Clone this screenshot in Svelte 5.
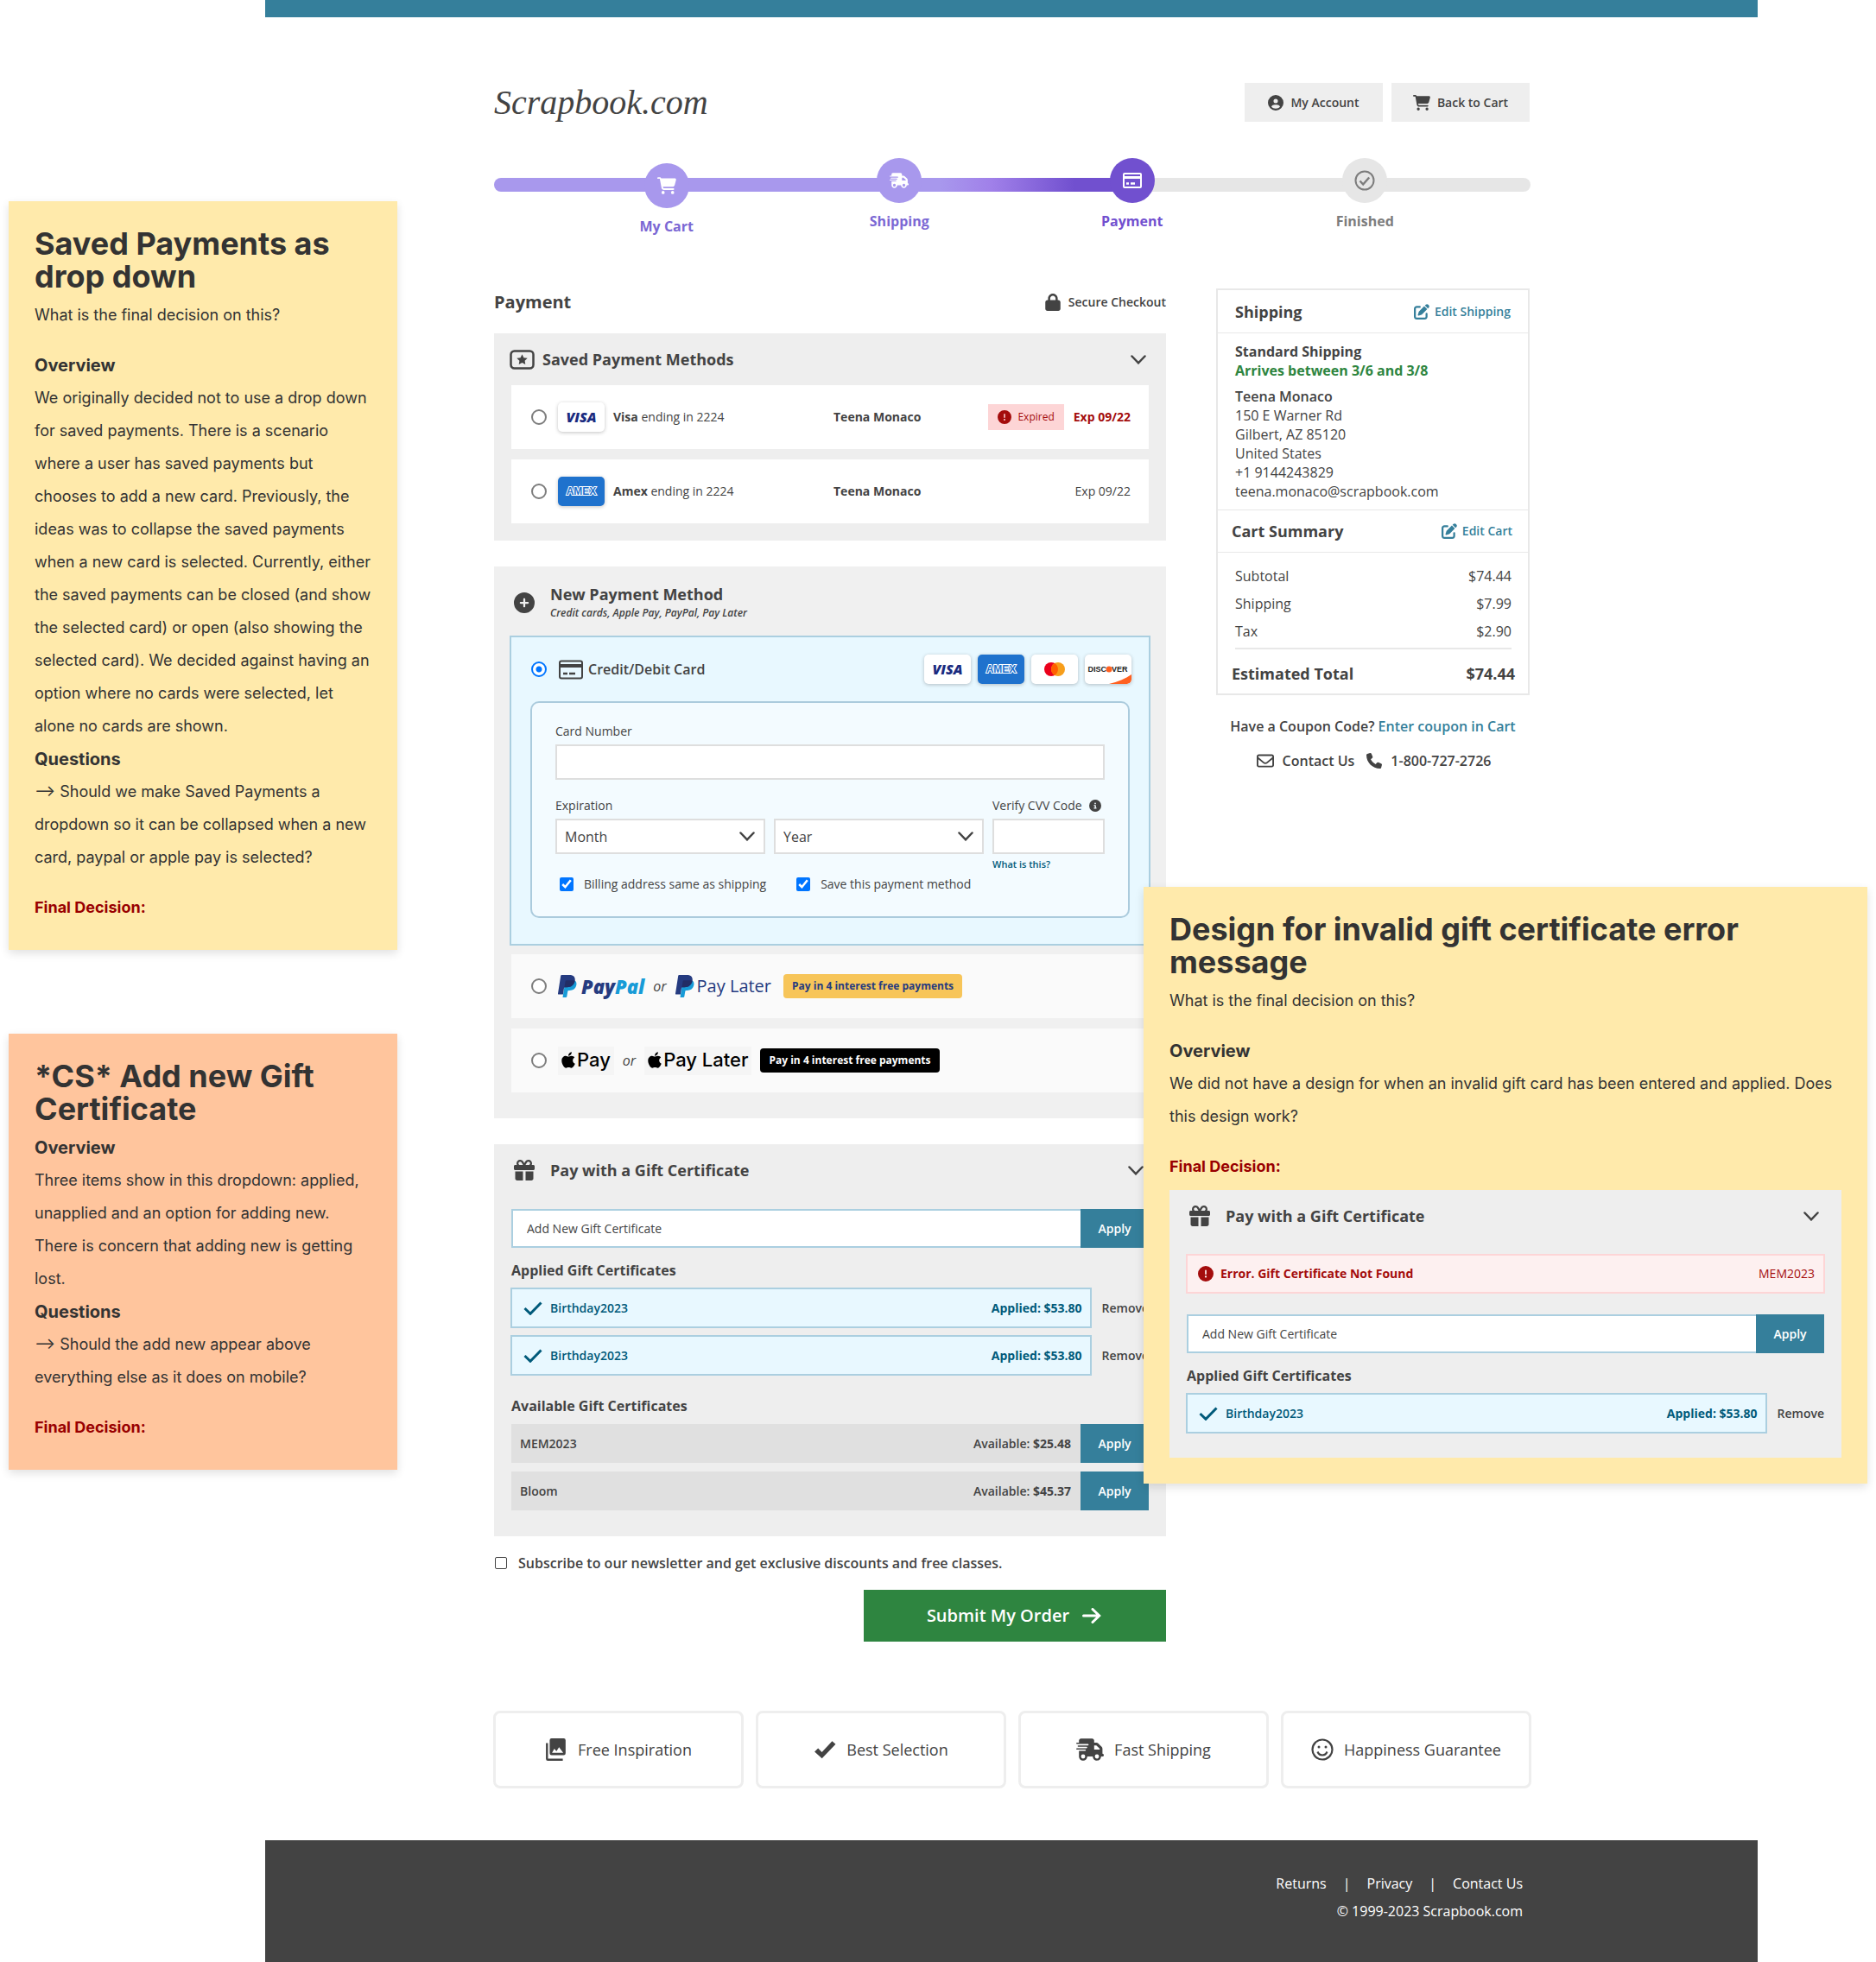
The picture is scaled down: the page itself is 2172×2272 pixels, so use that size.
<script>
  const icons = {
    cart: { vb: '0 0 576 512', d: 'M0 24C0 10.7 10.7 0 24 0H69.5c22 0 41.5 12.8 50.6 32h411c26.3 0 45.5 25 38.6 50.4l-41 152.3c-8.5 31.4-37 53.3-69.5 53.3H170.7l5.4 28.5c2.2 11.3 12.1 19.5 23.6 19.5H488c13.3 0 24 10.7 24 24s-10.7 24-24 24H199.7c-34.6 0-64.3-24.6-70.7-58.5L77.4 54.5c-.7-3.8-4-6.5-7.9-6.5H24C10.7 48 0 37.3 0 24zM128 464a48 48 0 1 1 96 0 48 48 0 1 1 -96 0zm336-48a48 48 0 1 1 0 96 48 48 0 1 1 0-96z' },
    user: { vb: '0 0 512 512', d: 'M399 384.2C376.9 345.8 335.4 320 288 320H224c-47.4 0-88.9 25.8-111 64.2c35.2 39.2 86.2 63.8 143 63.8s107.8-24.7 143-63.8zM0 256a256 256 0 1 1 512 0A256 256 0 1 1 0 256zm256 16a72 72 0 1 0 0-144 72 72 0 1 0 0 144z' },
    truck: { vb: '0 0 640 512', d: 'M112 0C85.5 0 64 21.5 64 48V96H16c-8.8 0-16 7.2-16 16s7.2 16 16 16H64 272c8.8 0 16 7.2 16 16s-7.2 16-16 16H64 48c-8.8 0-16 7.2-16 16s7.2 16 16 16H64 240c8.8 0 16 7.2 16 16s-7.2 16-16 16H64 16c-8.8 0-16 7.2-16 16s7.2 16 16 16H64 208c8.8 0 16 7.2 16 16s-7.2 16-16 16H64V416c0 53 43 96 96 96s96-43 96-96H384c0 53 43 96 96 96s96-43 96-96h32c17.7 0 32-14.3 32-32s-14.3-32-32-32V288 256 237.3c0-17-6.7-33.3-18.7-45.3L512 114.7c-12-12-28.3-18.7-45.3-18.7H416V48c0-26.5-21.5-48-48-48H112zM544 237.3V256H416V160h50.7L544 237.3zM160 368a48 48 0 1 1 0 96 48 48 0 1 1 0-96zm272 48a48 48 0 1 1 96 0 48 48 0 1 1 -96 0z' },
    lock: { vb: '0 0 448 512', d: 'M144 144v48H304V144c0-44.2-35.8-80-80-80s-80 35.8-80 80zM80 192V144C80 64.5 144.5 0 224 0s144 64.5 144 144v48h16c35.3 0 64 28.7 64 64V448c0 35.3-28.7 64-64 64H64c-35.3 0-64-28.7-64-64V256c0-35.3 28.7-64 64-64H80z' },
    edit: { vb: '0 0 512 512', d: 'M471.6 21.7c-21.9-21.9-57.3-21.9-79.2 0L362.3 51.7l97.9 97.9 30.1-30.1c21.9-21.9 21.9-57.3 0-79.2L471.6 21.7zm-299.2 220c-6.1 6.1-10.8 13.6-13.5 21.9l-29.6 88.8c-2.9 8.6-.6 18.1 5.8 24.6s15.9 8.7 24.6 5.8l88.8-29.6c8.2-2.7 15.7-7.4 21.9-13.5L437.7 172.3 339.7 74.3 172.4 241.7zM96 64C43 64 0 107 0 160V416c0 53 43 96 96 96H352c53 0 96-43 96-96V320c0-17.7-14.3-32-32-32s-32 14.3-32 32v96c0 17.7-14.3 32-32 32H96c-17.7 0-32-14.3-32-32V160c0-17.7 14.3-32 32-32h96c17.7 0 32-14.3 32-32s-14.3-32-32-32H96z' },
    mail: { vb: '0 0 512 512', d: 'M64 112c-8.8 0-16 7.2-16 16v22.1L220.5 291.7c20.7 17 50.4 17 71.1 0L464 150.1V128c0-8.8-7.2-16-16-16H64zM48 212.2V384c0 8.8 7.2 16 16 16H448c8.8 0 16-7.2 16-16V212.2L322 328.8c-38.4 31.5-93.7 31.5-132 0L48 212.2zM0 128C0 92.7 28.7 64 64 64H448c35.3 0 64 28.7 64 64V384c0 35.3-28.7 64-64 64H64c-35.3 0-64-28.7-64-64V128z' },
    phone: { vb: '0 0 512 512', d: 'M164.9 24.6c-7.7-18.6-28-28.5-47.4-23.2l-88 24C12.1 30.2 0 46 0 64C0 311.4 200.6 512 448 512c18 0 33.8-12.1 38.6-29.5l24-88c5.3-19.4-4.6-39.7-23.2-47.4l-96-40c-16.3-6.8-35.2-2.1-46.3 11.6L304.7 368C234.3 334.7 177.3 277.7 144 207.3L193.3 167c13.7-11.2 18.4-30 11.6-46.3l-40-96z' },
    plus: { vb: '0 0 512 512', d: 'M256 512A256 256 0 1 0 256 0a256 256 0 1 0 0 512zM232 344V280H168c-13.3 0-24-10.7-24-24s10.7-24 24-24h64V168c0-13.3 10.7-24 24-24s24 10.7 24 24v64h64c13.3 0 24 10.7 24 24s-10.7 24-24 24H280v64c0 13.3-10.7 24-24 24s-24-10.7-24-24z' },
    gift: { vb: '0 0 512 512', d: 'M190.5 68.8L225.3 128H224 152c-22.1 0-40-17.9-40-40s17.9-40 40-40h2.2c14.9 0 28.8 7.9 36.3 20.8zM64 88c0 14.4 3.5 28 9.6 40H32c-17.7 0-32 14.3-32 32v64c0 17.7 14.3 32 32 32H480c17.7 0 32-14.3 32-32V160c0-17.7-14.3-32-32-32H438.4c6.1-12 9.6-25.6 9.6-40c0-48.6-39.4-88-88-88h-2.2c-31.9 0-61.5 16.9-77.7 44.4L256 85.5l-24.1-41C215.7 16.9 186.1 0 154.2 0H152C103.4 0 64 39.4 64 88zm336 0c0 22.1-17.9 40-40 40H288h-1.3l34.8-59.2C329.1 55.9 342.9 48 357.8 48H360c22.1 0 40 17.9 40 40zM32 288V464c0 26.5 21.5 48 48 48H224V288H32zM288 512H432c26.5 0 48-21.5 48-48V288H288V512z' },
    alert: { vb: '0 0 512 512', d: 'M256 512A256 256 0 1 0 256 0a256 256 0 1 0 0 512zm0-384c13.300 0 24 10.700 24 24V264c0 13.300-10.700 24-24 24s-24-10.700-24-24V152c0-13.300 10.700-24 24-24zM224 352a32 32 0 1 1 64 0 32 32 0 1 1 -64 0z' },
    info: { vb: '0 0 512 512', d: 'M256 512A256 256 0 1 0 256 0a256 256 0 1 0 0 512zM216 336h24V272H216c-13.300 0-24-10.700-24-24s10.700-24 24-24h48c13.300 0 24 10.700 24 24v88h8c13.300 0 24 10.700 24 24s-10.700 24-24 24H216c-13.300 0-24-10.700-24-24s10.700-24 24-24zm40-208a32 32 0 1 1 0 64 32 32 0 1 1 0-64z' },
    photos: { vb: '0 0 24 24', d: 'M22 16V2a2 2 0 0 0-2-2H7a2 2 0 0 0-2 2v14a2 2 0 0 0 2 2h13a2 2 0 0 0 2-2zM10 11l2.200 2.900L15 9.500l4.500 6H7.500L10 11zM1 5v17a2 2 0 0 0 2 2h16v-2.200H3.200V5H1z' },
    tick: { vb: '0 0 24 24', d: 'M1 14.200 4.800 10.500 8.800 14.700 19.800 3 23.500 6.200 8.900 21.500z' }
  };

  const saved = [
    { id: 'visa', brand: 'Visa', last: '2224', owner: 'Teena Monaco', exp: 'Exp 09/22', expired: true },
    { id: 'amex', brand: 'Amex', last: '2224', owner: 'Teena Monaco', exp: 'Exp 09/22', expired: false }
  ];
  const applied = [
    { code: 'Birthday2023', amount: '$53.80' },
    { code: 'Birthday2023', amount: '$53.80' }
  ];
  const available = [
    { code: 'MEM2023', amount: '$25.48' },
    { code: 'Bloom', amount: '$45.37' }
  ];
  const totals = [
    ['Subtotal', '$74.44'],
    ['Shipping', '$7.99'],
    ['Tax', '$2.90']
  ];
  const perks = [
    { icon: 'photos', label: 'Free Inspiration' },
    { icon: 'tick', label: 'Best Selection' },
    { icon: 'truck', label: 'Fast Shipping' },
    { icon: 'smile', label: 'Happiness Guarantee' }
  ];
  let method = $state('card');
</script>

{#snippet icon(name, size)}
  <svg class="icon {size}" viewBox={icons[name].vb} aria-hidden="true"><path d={icons[name].d} /></svg>
{/snippet}

{#snippet chevron()}
  <svg class="chevron" viewBox="0 0 18 11" aria-hidden="true"><path d="M1.500 1.500 9 9.300 16.500 1.500" /></svg>
{/snippet}

{#snippet check()}
  <svg class="check" viewBox="0 0 22 16" aria-hidden="true"><path d="M1.500 8 8 14.300 20.500 1.500" /></svg>
{/snippet}

{#snippet cardLogo(brand)}
  {#if brand === 'visa'}
    <svg class="paycard" viewBox="0 0 54 34" role="img" aria-label="Visa"><text class="visa" x="27" y="23" text-anchor="middle">VISA</text></svg>
  {:else if brand === 'amex'}
    <svg class="paycard blue" viewBox="0 0 54 34" role="img" aria-label="Amex"><text class="amex" x="27" y="21" text-anchor="middle">AMEX</text></svg>
  {:else if brand === 'mastercard'}
    <svg class="paycard" viewBox="0 0 54 34" role="img" aria-label="Mastercard">
      <circle cx="23" cy="17" r="8" fill="#eb001b" /><circle cx="31" cy="17" r="8" fill="#f79e1b" />
      <path d="M27 10.100a8 8 0 0 1 0 13.800 8 8 0 0 1 0-13.800z" fill="#ff5f00" />
    </svg>
  {:else}
    <svg class="paycard" viewBox="0 0 54 34" role="img" aria-label="Discover">
      <path d="M28 34C38 31.500 47 28 54 23v6a5 5 0 0 1-5 5z" fill="#ff6020" />
      <text class="disc" x="25" y="20" text-anchor="end">DISC</text><circle cx="28" cy="17" r="3.500" fill="#ff6020" />
      <text class="disc" x="31" y="20">VER</text>
    </svg>
  {/if}
{/snippet}

{#snippet ppMark()}
  <svg class="ppmark" viewBox="0 0 22 26" aria-hidden="true">
    <path fill="#179bd7" d="M19.600 6.500c1.700 1.300 2.200 3.100 1.700 5.300-.9 4.200-3.800 6.200-7.800 6.200h-1.200c-.5 0-.9.400-1 .9l-1 6.100c-.1.600-.5 1-1.100 1H5.500l3-19.500z" />
    <path fill="#253b80" d="M4.300 0h8.800c4.700 0 7.300 2.300 6.500 6.800-.9 5-4.300 7.400-9.100 7.400H8.100c-.6 0-1 .4-1.100 1l-1.100 7.300H.8c-.5 0-.9-.4-.8-.9L3.200 1C3.300.4 3.700 0 4.300 0z" />
    <path fill="#222d65" d="M8.600 7.200c.1-.6.500-.9 1-.9h6.300c1.300 0 2.600.1 3.700.5-.9 5-4.300 7.400-9.100 7.400H8.100c-.3 0-.5.100-.7.300z" />
  </svg>
{/snippet}

{#snippet apple()}
  <svg class="apple" viewBox="0 0 384 512" aria-hidden="true"><path d="M318.700 268.700c-.2-36.700 16.400-64.400 50-84.800-18.800-26.900-47.200-41.700-84.700-44.600-35.500-2.800-74.300 20.700-88.500 20.700-15 0-49.400-19.700-76.400-19.700C63.300 141.200 4 184.800 4 273.500q0 39.300 14.400 81.200c12.800 36.700 59 126.700 107.200 125.200 25.200-.6 43-17.900 75.800-17.900 31.800 0 48.300 17.900 76.400 17.900 48.600-.7 90.400-82.500 102.600-119.300-65.200-30.700-61.700-90-61.700-91.900zm-56.600-164.200c27.300-32.400 24.800-61.900 24-72.500-24.100 1.400-52 16.400-67.900 34.900-17.500 19.800-27.800 44.300-25.600 71.900 26.100 2 49.900-11.400 69.500-34.300z" /></svg>
{/snippet}

{#snippet giftHead()}
  <header class="panel-head">
    {@render icon('gift', 's24')}
    <h2>Pay with a Gift Certificate</h2>
    <button class="bare push" aria-label="Toggle gift certificates">{@render chevron()}</button>
  </header>
{/snippet}

{#snippet giftForm(id)}
  <div class="joined add">
    <input {id} type="text" placeholder="Add New Gift Certificate" aria-label="Add New Gift Certificate" />
    <button class="apply">Apply</button>
  </div>
{/snippet}

{#snippet appliedRow(g)}
  <div class="applied">
    <div class="applied-box">
      {@render check()}
      <span>{g.code}</span>
      <strong class="push">Applied: {g.amount}</strong>
    </div>
    <button class="bare remove">Remove</button>
  </div>
{/snippet}

<div class="canvas">
  <div class="frame">
    <div class="topbar"></div>
    <div class="content">
      <header class="masthead">
        <a class="logo" href="#home">Scrapbook.com</a>
        <nav class="account">
          <a class="grey-btn" href="#account">{@render icon('user', 's18')}My Account</a>
          <a class="grey-btn" href="#cart">{@render icon('cart', 's20')}Back to Cart</a>
        </nav>
      </header>

      <div class="stepper">
        <div class="track"></div>
        <ol class="steps">
          <li class="start"><span class="dot">{@render icon('cart', 's22')}</span>My Cart</li>
          <li><span class="dot">{@render icon('truck', 's22')}</span>Shipping</li>
          <li class="current">
            <span class="dot">
              <svg class="s22" viewBox="0 0 22 18" fill="none" stroke="#fff" stroke-width="2" aria-hidden="true"><rect x="1" y="1" width="20" height="16" rx="1" /><path d="M1 5.500h20" stroke-width="3" /><path d="M4 12.500h3M9 12.500h5" stroke-width="2.500" /></svg>
            </span>Payment
          </li>
          <li class="todo">
            <span class="dot">
              <svg class="s24" viewBox="0 0 24 24" fill="none" stroke="#7d7d7d" stroke-width="2" aria-hidden="true"><circle cx="12" cy="12" r="10.500" /><path d="m6.500 12.500 3.700 4 7-8" stroke-width="2.500" /></svg>
            </span>Finished
          </li>
        </ol>
      </div>

      <div class="columns">
        <main>
          <div class="title-row">
            <h1>Payment</h1>
            <span class="secure">{@render icon('lock', 's20')}Secure Checkout</span>
          </div>

          <section class="panel">
            <header class="panel-head tight">
              <svg class="star" viewBox="0 0 29 23" aria-hidden="true"><rect x="1.500" y="1.500" width="26" height="20" rx="4" fill="none" stroke="#434343" stroke-width="2.500" /><path fill="#434343" d="m14.500 5.300 1.900 3.900 4.300.6-3.100 3 .7 4.300-3.800-2-3.800 2 .7-4.300-3.100-3 4.300-.6z" /></svg>
              <h2>Saved Payment Methods</h2>
              <button class="bare push" aria-label="Toggle saved payment methods">{@render chevron()}</button>
            </header>
            <div class="stack">
              {#each saved as s}
                <div class="saved-row">
                  <input type="radio" id={s.id} value={s.id} bind:group={method} />
                  {@render cardLogo(s.id)}
                  <label for={s.id}><strong>{s.brand}</strong> ending in {s.last}</label>
                  <strong>{s.owner}</strong>
                  <span class="exp" class:late={s.expired}>
                    {#if s.expired}<span class="expired">{@render icon('alert', 's16')}Expired</span>{/if}
                    <span>{s.exp}</span>
                  </span>
                </div>
              {/each}
            </div>
          </section>

          <section class="panel new">
            <header class="panel-head tall">
              {@render icon('plus', 's24')}
              <div>
                <h2>New Payment Method</h2>
                <p>Credit cards, Apple Pay, PayPal, Pay Later</p>
              </div>
            </header>
            <div class="card-box">
              <div class="card-head">
                <input type="radio" id="card" value="card" bind:group={method} />
                <svg class="s28" viewBox="0 0 28 23" fill="none" stroke="#434343" stroke-width="2" aria-hidden="true"><rect x="1" y="1.500" width="26" height="20" rx="2" /><path d="M1 7h26" stroke-width="4" /><path d="M5 16h5M12 16h7" stroke-width="2.500" /></svg>
                <label for="card">Credit/Debit Card</label>
                <span class="logos push">
                  {#each ['visa', 'amex', 'mastercard', 'discover'] as b}{@render cardLogo(b)}{/each}
                </span>
              </div>
              <div class="card-form">
                <label for="number">Card Number</label>
                <input id="number" type="text" />
                <div class="fields">
                  <div>
                    <label for="month">Expiration</label>
                    <div class="select"><select id="month"><option>Month</option></select>{@render chevron()}</div>
                  </div>
                  <div>
                    <label for="year" aria-label="Expiration year">&nbsp;</label>
                    <div class="select"><select id="year"><option>Year</option></select>{@render chevron()}</div>
                  </div>
                  <div>
                    <label class="cvv" for="cvv">Verify CVV Code {@render icon('info', 's14')}</label>
                    <input id="cvv" type="text" />
                    <a class="what" href="#cvv-help">What is this?</a>
                  </div>
                </div>
                <div class="checks">
                  <label><input type="checkbox" checked />Billing address same as shipping</label>
                  <label><input type="checkbox" checked />Save this payment method</label>
                </div>
              </div>
            </div>
            <div class="stack">
              <div class="wallet">
                <input type="radio" id="paypal" value="paypal" bind:group={method} aria-label="PayPal or Pay Later" />
                <label class="pp" for="paypal">{@render ppMark()}<span class="pp-name">Pay<span>Pal</span></span></label>
                <i>or</i>
                <span class="pp later">{@render ppMark()}Pay Later</span>
                <span class="tag gold">Pay in 4 interest free payments</span>
              </div>
              <div class="wallet">
                <input type="radio" id="apple" value="apple" bind:group={method} aria-label="Apple Pay or Pay Later" />
                <label class="ap" for="apple">{@render apple()}Pay</label>
                <i>or</i>
                <span class="ap">{@render apple()}Pay Later</span>
                <span class="tag black">Pay in 4 interest free payments</span>
              </div>
            </div>
          </section>

          <section class="panel gift">
            {@render giftHead()}
            {@render giftForm('gift-code')}
            <h3>Applied Gift Certificates</h3>
            {#each applied as g}{@render appliedRow(g)}{/each}
            <h3 class="more">Available Gift Certificates</h3>
            {#each available as g}
              <div class="joined avail">
                <div class="avail-box"><span>{g.code}</span><span class="push">Available: <strong>{g.amount}</strong></span></div>
                <button class="apply">Apply</button>
              </div>
            {/each}
          </section>

          <label class="news"><input type="checkbox" />Subscribe to our newsletter and get exclusive discounts and free classes.</label>
          <button class="submit">Submit My Order
            <svg class="arrow" viewBox="0 0 22 18" aria-hidden="true"><path d="M1.500 9h18M12 1.500 19.700 9 12 16.500" /></svg>
          </button>
        </main>

        <aside>
          <div class="summary">
            <header><h2>Shipping</h2><a href="#shipping">{@render icon('edit', 's18')}Edit Shipping</a></header>
            <div class="address">
              <p><strong>Standard Shipping</strong><br /><strong class="green">Arrives between 3/6 and 3/8</strong></p>
              <address><b>Teena Monaco</b><br />150 E Warner Rd<br />Gilbert, AZ 85120<br />United States<br />+1 9144243829<br />teena.monaco@scrapbook.com</address>
            </div>
            <header class="cart-head"><h2>Cart Summary</h2><a href="#cart">{@render icon('edit', 's18')}Edit Cart</a></header>
            <table>
              <tbody>
                {#each totals as [name, value]}<tr><th scope="row">{name}</th><td>{value}</td></tr>{/each}
              </tbody>
            </table>
            <div class="total"><span>Estimated Total</span><span>$74.44</span></div>
          </div>
          <p class="coupon">Have a Coupon Code? <a href="#coupon">Enter coupon in Cart</a></p>
          <p class="contact">
            <a href="#contact">{@render icon('mail', 's20')}Contact Us</a>
            <a href="#phone">{@render icon('phone', 's18')}1-800-727-2726</a>
          </p>
        </aside>
      </div>

      <ul class="perks">
        {#each perks as p}
          <li>
            {#if p.icon === 'smile'}
              <svg class="s26" viewBox="0 0 26 26" fill="none" stroke="#434343" stroke-width="2.200" aria-hidden="true"><circle cx="13" cy="13" r="11.500" /><path d="M7.500 15.500c1 2.600 3 4 5.500 4s4.500-1.400 5.500-4" /><circle cx="9" cy="10" r="1.500" fill="#434343" stroke="none" /><circle cx="17" cy="10" r="1.500" fill="#434343" stroke="none" /></svg>
            {:else}
              {@render icon(p.icon, p.icon === 'truck' ? 's30' : 's26')}
            {/if}
            {p.label}
          </li>
        {/each}
      </ul>
    </div>

    <footer class="foot">
      <nav><a href="#returns">Returns</a><span>|</span><a href="#privacy">Privacy</a><span>|</span><a href="#contact">Contact Us</a></nav>
      <p>© 1999-2023 Scrapbook.com</p>
    </footer>
  </div>

  <article class="note saved-note">
    <h2>Saved Payments as drop down</h2>
    <p>What is the final decision on this?</p>
    <h3 class="gap">Overview</h3>
    <p>We originally decided not to use a drop down for saved payments. There is a scenario where a user has saved payments but chooses to add a new card. Previously, the ideas was to collapse the saved payments when a new card is selected. Currently, either the saved payments can be closed (and show the selected card) or open (also showing the selected card). We decided against having an option where no cards were selected, let alone no cards are shown.</p>
    <h3>Questions</h3>
    <p>⟶ Should we make Saved Payments a dropdown so it can be collapsed when a new card, paypal or apple pay is selected?</p>
    <h4>Final Decision:</h4>
  </article>

  <article class="note cs-note">
    <h2>*CS* Add new Gift Certificate</h2>
    <h3>Overview</h3>
    <p>Three items show in this dropdown: applied, unapplied and an option for adding new. There is concern that adding new is getting lost.</p>
    <h3>Questions</h3>
    <p>⟶ Should the add new appear above everything else as it does on mobile?</p>
    <h4>Final Decision:</h4>
  </article>

  <article class="note error-note">
    <h2>Design for invalid gift certificate error message</h2>
    <p>What is the final decision on this?</p>
    <h3 class="gap">Overview</h3>
    <p>We did not have a design for when an invalid gift card has been entered and applied. Does this design work?</p>
    <h4>Final Decision:</h4>
    <section class="panel gift inset">
      {@render giftHead()}
      <div class="error">{@render icon('alert', 's18')}<strong>Error. Gift Certificate Not Found</strong><span class="push">MEM2023</span></div>
      {@render giftForm('gift-code-retry')}
      <h3>Applied Gift Certificates</h3>
      {@render appliedRow(applied[0])}
    </section>
  </article>
</div>

<style>
  :global(body) { background: #fff; }
  .canvas, .canvas :global(*) { box-sizing: border-box; }
  .canvas { position: relative; font: 14px/20px "Open Sans", sans-serif; color: #434343; }
  h1, h2, h3, h4, p, ol, ul { margin: 0; padding: 0; }
  li { list-style: none; }
  a { color: inherit; text-decoration: none; }
  b { font-weight: 600; }
  strong { font-weight: 700; }
  button, input, select { font: inherit; color: inherit; border-radius: 0; margin: 0; }
  button { cursor: pointer; border: 0; }
  svg { flex: none; display: block; }
  .icon { fill: currentColor; }
  .s14 { width: 14px; height: 14px; }
  .s16 { width: 16px; height: 16px; }
  .s18 { width: 18px; height: 18px; }
  .s20 { width: 20px; height: 20px; }
  .s22 { width: 22px; height: 20px; }
  .s24 { width: 24px; height: 24px; }
  .s26 { width: 26px; height: 26px; }
  .s28 { width: 28px; height: 23px; }
  .s30 { width: 32px; height: 26px; }
  .push { margin-left: auto; }
  .bare { background: none; padding: 0; }
  .chevron { width: 18px; height: 11px; fill: none; stroke: #434343; stroke-width: 2.5; stroke-linecap: round; }
  .check { width: 22px; height: 16px; fill: none; stroke: #005a7a; stroke-width: 3; }

  .frame { margin: 0 137px 0 307px; }
  .topbar { height: 20px; background: #357f9b; }
  .content { margin: 0 263px 0 265px; }
  .masthead { display: flex; justify-content: space-between; align-items: center; height: 45px; margin-top: 76px; padding-right: 1px; }
  .logo { font: italic 40px/45px "Liberation Serif", serif; }
  .account { display: flex; gap: 10px; }
  .grey-btn { display: flex; align-items: center; justify-content: center; gap: 8px; width: 160px; height: 45px; background: #eee; font-weight: 600; }

  .stepper { display: grid; margin-top: 42px; }
  .track { grid-area: 1 / 1; height: 16px; margin-top: 23px; border-radius: 8px; background: linear-gradient(90deg, #a898ed 43%, #a080e9 48%, #7150cf 56%, #7150cf 62%, #e6e6e6 62%); }
  .steps { grid-area: 1 / 1; display: grid; grid-template-columns: repeat(4, 1fr); padding: 0 57px 0 65px; font-size: 16px; line-height: 24px; font-weight: 700; color: #7b68d4; }
  .steps li { display: flex; flex-direction: column; align-items: center; gap: 9px; }
  .steps .start { padding-top: 6px; }
  .steps .current { color: #7150cf; }
  .steps .todo { color: #7d7d7d; }
  .dot { display: flex; align-items: center; justify-content: center; width: 52px; height: 52px; border-radius: 50%; background: #a898ed; color: #fff; }
  .current .dot { background: #7150cf; }
  .todo .dot { background: #e6e6e6; }

  .columns { display: grid; grid-template-columns: 1fr 363px; gap: 58px; margin-top: 60px; padding-right: 1px; align-items: start; }
  .title-row { display: flex; justify-content: space-between; align-items: center; height: 32px; margin-bottom: 20px; }
  h1 { font-size: 20px; line-height: 32px; font-weight: 700; }
  .secure { display: flex; align-items: center; gap: 8px; font-weight: 600; }

  .panel { background: #eee; padding: 0 20px 20px; margin-bottom: 30px; }
  .panel h2 { font: 700 18px/24px "Open Sans", sans-serif; }
  .panel-head { display: flex; align-items: center; gap: 18px; height: 60px; padding: 0 6px 0 3px; }
  .panel-head.tight { gap: 9px; margin-left: -5px; padding: 0 3px; }
  .panel-head.tall { height: 80px; padding-top: 4px; }
  .panel-head p { font-size: 12px; line-height: 20px; font-style: italic; font-weight: 600; }
  .star { width: 29px; height: 23px; }
  .stack { display: grid; gap: 12px; }

  input[type='radio'] { appearance: none; width: 18px; height: 18px; border: 2px solid #7d7d7d; border-radius: 50%; background: #fff; flex: none; }
  input[type='radio']:checked { border-color: #0075ff; background: radial-gradient(circle, #0075ff 0 3px, #fff 4px); }
  .saved-row { display: grid; grid-template-columns: 21px 54px 245px 1fr auto; align-items: center; gap: 10px; height: 74px; padding: 0 21px 0 23px; background: #fff; }
  .exp { display: flex; align-items: center; gap: 11px; font-weight: 500; }
  .late { color: #a40c0c; font-weight: 700; }
  .expired { display: flex; align-items: center; gap: 7px; height: 30px; padding: 0 11px; background: #fdd5d6; font-size: 12px; font-weight: 500; }
  .paycard { width: 54px; height: 34px; border-radius: 5px; background: #fff; box-shadow: 0 1px 4px rgb(0 0 0 / 24%); }
  .paycard.blue { background: #1f72cd; }
  .visa { font: italic 800 16px "Open Sans", sans-serif; fill: #1a2b80; }
  .amex { font: 700 12px "Liberation Sans", sans-serif; fill: #1f72cd; stroke: #fff; stroke-width: 2px; paint-order: stroke; }
  .disc { font: 700 9px "Liberation Sans", sans-serif; fill: #222; }

  .new { background: #f0f0f0; padding-bottom: 30px; }
  .card-box { margin: 0 -2px 10px; padding: 0 22px 30px; border: 2px solid #abcfe0; background: #e8f8ff; }
  .card-head { display: flex; align-items: center; height: 74px; gap: 14px; margin: 0 -2px 0 1px; font-size: 16px; font-weight: 600; }
  .card-head label { margin-left: -8px; }
  .logos { display: flex; gap: 8px; }
  .card-form { border: 2px solid #abcbdd; border-radius: 10px; background: #f3fbff; padding: 23px 27px 27px; }
  .card-form label { display: block; }
  input[type='text'], select { display: block; width: 100%; height: 41px; border: 2px solid #dedede; background: #fff; }
  .card-form > input { margin-top: 5px; }
  .fields { display: grid; grid-template-columns: 1fr 1fr 130px; gap: 10px; margin-top: 20px; }
  .fields input, .select { margin-top: 5px; }
  .select { display: grid; align-items: center; }
  .select select { grid-area: 1 / 1; appearance: none; padding: 0 9px; font-size: 16px; }
  .select .chevron { grid-area: 1 / 1; justify-self: end; margin-right: 12px; pointer-events: none; }
  .card-form .cvv { display: flex; align-items: center; gap: 8px; white-space: nowrap; }
  .what { display: block; margin-top: 4px; font-size: 11px; line-height: 16px; font-weight: 600; color: #005a7a; }
  .checks { display: flex; gap: 35px; margin: 5px 0 0 5px; }
  .checks label { display: flex; align-items: center; gap: 12px; }
  .checks input { width: 16px; height: 16px; accent-color: #0075ff; }

  .wallet { display: flex; align-items: center; height: 74px; padding: 0 23px; gap: 10px; background: #fafafa; }
  .wallet input { margin-right: 3px; }
  .wallet i { font-size: 16px; font-weight: 500; }
  .pp { display: flex; align-items: center; gap: 5px; font-size: 20px; color: #253b80; }
  .pp-name { font-weight: 800; font-style: italic; font-size: 22px; }
  .pp-name span { color: #179bd7; }
  .later { gap: 3px; font-weight: 500; margin-right: 4px; }
  .ppmark { width: 22px; height: 26px; }
  .ap { display: flex; align-items: center; gap: 2px; height: 33px; padding: 0 4px 2px; background: #f5f5f5; font: 500 22px "Inter", sans-serif; color: #000; }
  .apple { width: 16px; height: 21px; fill: #000; }
  .tag { height: 28px; padding: 0 10px; border-radius: 4px; font-size: 12px; line-height: 28px; font-weight: 700; }
  .gold { background: #f7c559; color: #253b80; }
  .black { background: #000; color: #fff; }

  .gift { padding-bottom: 30px; margin-bottom: 0; }
  .joined { display: flex; height: 45px; }
  .add { margin-top: 15px; }
  .add input { flex: 1; height: 45px; padding: 0 16px; border: 2px solid #abcfe0; border-right: 0; }
  .add input::placeholder { color: #434343; opacity: 1; }
  .apply { width: 79px; background: #357f9b; color: #fff; font-weight: 600; }
  .panel h3 { font: 700 16px/22px "Open Sans", sans-serif; margin: 15px 0 9px; }
  .panel h3.more { margin: 24px 0 10px; }
  .applied { display: flex; align-items: center; margin: 0 0 8px -1px; }
  .applied-box { flex: 1; display: flex; align-items: center; gap: 9px; height: 47px; padding: 0 9px 0 13px; border: 2px solid #abcfe0; background: #e8f8ff; color: #005a7a; font-weight: 600; }
  .remove { margin-left: 12px; font-weight: 600; }
  .avail + .avail { margin-top: 10px; }
  .avail-box { flex: 1; display: flex; align-items: center; padding: 0 11px 0 10px; background: #e0e0e0; font-weight: 600; }

  .news { display: flex; align-items: center; gap: 13px; margin-top: 19px; font-size: 16px; line-height: 24px; font-weight: 600; }
  .news input { appearance: none; width: 14px; height: 14px; margin-left: 1px; border: 1px solid #434343; border-radius: 2px; background: #fff; }
  .news input:checked { background: #0075ff; }
  .submit { display: flex; align-items: center; justify-content: center; gap: 15px; width: 350px; height: 60px; margin: 19px 0 0 auto; padding: 0 8px 0 6px; background: #2e8540; color: #fff; font-size: 20px; font-weight: 600; }
  .arrow { width: 22px; height: 18px; fill: none; stroke: #fff; stroke-width: 3; stroke-linecap: round; }

  .summary { border: 2px solid #e8e8e8; font-size: 16px; line-height: 22px; }
  .summary header { display: flex; align-items: center; justify-content: space-between; height: 50px; padding: 0 20px; border-bottom: 1px solid #e8e8e8; }
  .summary h2 { font-size: 18px; line-height: 24px; font-weight: 700; }
  .summary header a { display: flex; align-items: center; gap: 6px; font-size: 14px; font-weight: 600; color: #357f9b; }
  .summary header.cart-head { border-top: 1px solid #e8e8e8; padding: 0 18px 0 16px; }
  .address { padding: 10px 20px; }
  .address address { margin-top: 8px; font-style: normal; }
  .green { color: #2e8540; }
  table { width: calc(100% - 39px); margin: 11px 19px 0 20px; border-collapse: collapse; border-bottom: 2px solid #e8e8e8; }
  th, td { padding: 5px 0; font-weight: 400; text-align: left; }
  td { text-align: right; }
  tr:last-child > * { padding-bottom: 8px; }
  .total { display: flex; justify-content: space-between; padding: 17px 15px 12px 16px; font-size: 18px; line-height: 22px; font-weight: 700; }
  .coupon { margin-top: 24px; font-size: 16px; line-height: 24px; font-weight: 600; text-align: center; }
  .coupon a { color: #357f9b; }
  .contact { display: flex; justify-content: center; gap: 14px; margin-top: 16px; padding-left: 2px; font-size: 16px; line-height: 24px; font-weight: 600; }
  .contact a { display: flex; align-items: center; gap: 10px; }

  .perks { display: grid; grid-template-columns: repeat(4, 1fr); gap: 14px; margin: 80px -1px 0; }
  .perks li { display: flex; align-items: center; justify-content: center; gap: 12px; height: 90px; border: 3px solid #eee; border-radius: 8px; font-size: 18px; font-weight: 500; }

  .foot { margin-top: 60px; height: 141px; padding: 34px 272px 0; background: #434343; color: #fff; font-size: 16px; line-height: 32px; text-align: right; }
  .foot nav { display: flex; justify-content: flex-end; gap: 19px; }

  .note { position: absolute; padding: 30px; background: #ffeaab; color: #333; font: 18px/38px "Inter", sans-serif; box-shadow: 0 4px 10px rgb(0 0 0 / 12%); }
  .note > h2 { font-size: 36px; line-height: 38px; font-weight: 700; margin-bottom: 7px; }
  .note > h3 { font-size: 20px; line-height: 38px; font-weight: 700; }
  .note > h3.gap { margin-top: 20px; }
  .note > h4 { margin-top: 20px; font-size: 18px; font-weight: 700; color: #990000; }
  .saved-note { left: 10px; top: 233px; width: 450px; }
  .cs-note { left: 10px; top: 1197px; width: 450px; background: #ffc59d; }
  .error-note { right: 10px; top: 1027px; width: 838px; }
  .note > .inset { margin-top: 8px; font: 14px/20px "Open Sans", sans-serif; color: #434343; padding-bottom: 20px; }
  .error { display: flex; align-items: center; gap: 8px; height: 46px; margin: 14px -1px 24px; padding: 0 10px 0 12px; border: 2px solid #fdd5d6; background: #fdf0f0; color: #a40c0c; font-weight: 500; }
</style>
